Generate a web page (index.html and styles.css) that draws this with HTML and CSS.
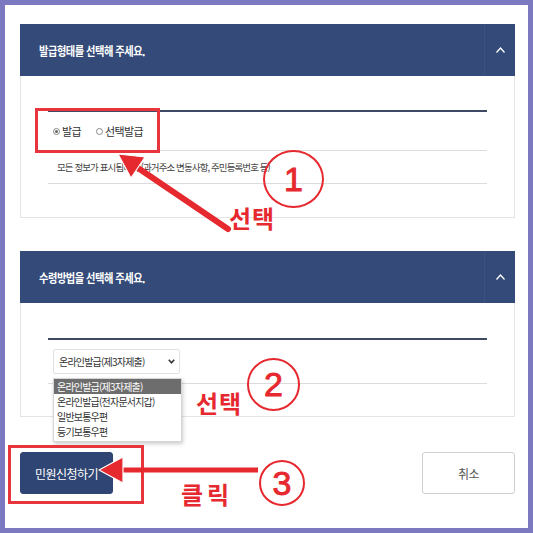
FILE: index.html
```html
<!DOCTYPE html>
<html lang="ko">
<head>
  <meta charset="UTF-8" />
  <meta name="viewport" content="width=device-width, initial-scale=1.0" />
  <title>민원신청</title>
  <link rel="stylesheet" href="styles.css">
</head>
<body>
  <div class="frame">
    <div class="panel">
      <div class="panel-head">
        <span class="panel-title">발급형태를 선택해 주세요.</span>
        <span class="toggle">
          <svg width="9" height="6" viewBox="0 0 9 6"><polyline points="0.5,5.5 4.5,1 8.5,5.5" fill="none" stroke="#fff" stroke-width="1.3"/></svg>
        </span>
      </div>
      <div class="panel-body">
        <div class="rule-dark"></div>
        <div class="radio-row">
          <label class="radio"><span class="dot on"></span>발급</label>
          <label class="radio"><span class="dot"></span>선택발급</label>
        </div>
        <div class="rule-light"></div>
        <div class="note-row">모든 정보가 표시됩니다 (과거주소 변동사항, 주민등록번호 등)</div>
        <div class="rule-light"></div>
      </div>
    </div>

    <div class="panel second">
      <div class="panel-head">
        <span class="panel-title">수령방법을 선택해 주세요.</span>
        <span class="toggle">
          <svg width="9" height="6" viewBox="0 0 9 6"><polyline points="0.5,5.5 4.5,1 8.5,5.5" fill="none" stroke="#fff" stroke-width="1.3"/></svg>
        </span>
      </div>
      <div class="panel-body">
        <div class="rule-dark"></div>
        <div class="select-row">
          <div class="select">
            <span>온라인발급(제3자제출)</span>
            <svg width="7" height="5" viewBox="0 0 7 5"><polyline points="0.8,0.8 3.5,3.8 6.2,0.8" fill="none" stroke="#333" stroke-width="1.6"/></svg>
          </div>
        </div>
        <div class="rule-light"></div>
      </div>
    </div>

    <div class="actions">
      <button class="btn primary">민원신청하기</button>
      <button class="btn">취소</button>
    </div>
  </div>

  <!-- open dropdown list -->
  <ul class="options">
    <li class="active">온라인발급(제3자제출)</li>
    <li>온라인발급(전자문서지갑)</li>
    <li>일반보통우편</li>
    <li>등기보통우편</li>
  </ul>

  <!-- annotations -->
  <div class="mark box1"></div>
  <div class="mark box3"></div>
  <svg class="arrows" width="533" height="533" viewBox="0 0 533 533">
    <line x1="228" y1="229" x2="138" y2="168" stroke="#e6282f" stroke-width="6" stroke-linecap="round"/>
    <polygon points="118,154 145,157 131,178" fill="#e6282f" stroke="#fff" stroke-width="1.2" stroke-linejoin="round"/>
    <line x1="258" y1="470" x2="120" y2="470" stroke="#e6282f" stroke-width="5"/>
    <polygon points="99,470 123,457 123,483" fill="#e6282f" stroke="#fff" stroke-width="1.2" stroke-linejoin="round"/>
  </svg>
  <div class="num n1">1</div>
  <div class="num n2">2</div>
  <div class="num n3">3</div>
  <div class="label l1">선택</div>
  <div class="label l2">선택</div>
  <div class="label l3">클릭</div>
</body>
</html>
```

FILE: styles.css
```css
body {
  margin: 0;
  font-family: "Noto Sans CJK KR", "Noto Sans", sans-serif;
  position: relative;
  width: 533px;
  height: 533px;
  overflow: hidden;
}
.frame {
  box-sizing: border-box;
  width: 533px;
  height: 533px;
  border: 5px solid #7c79c1;
  background: #fff;
  padding: 19px 13px 0 15px;
}
.panel-head {
  height: 52px;
  background: #344a78;
  display: flex;
  align-items: center;
  justify-content: space-between;
}
.panel-title {
  display: inline-block;
  margin-left: 19px;
  color: #fff;
  font-size: 12.5px;
  font-weight: bold;
  letter-spacing: -0.6px;
  transform: scaleX(0.82);
  transform-origin: left center;
}
.toggle {
  width: 30px;
  height: 100%;
  border-left: 1px solid #3b5283;
  display: flex;
  align-items: center;
  justify-content: center;
}
.panel-body {
  border: 1px solid #e4e4e4;
  border-top: none;
  padding: 34px 27px 33px;
}
.second {
  margin-top: 33px;
}
.second .panel-body {
  padding-top: 35px;
  padding-bottom: 32px;
}
.rule-dark {
  height: 2px;
  background: #3e4a63;
}
.rule-light {
  height: 1px;
  background: #dcdcdc;
}
.radio-row {
  height: 38px;
  display: flex;
  align-items: center;
  gap: 15px;
  padding-left: 5px;
  font-size: 11px;
  color: #333;
}
.radio {
  display: flex;
  align-items: center;
  gap: 2px;
  letter-spacing: -0.6px;
}
.dot {
  width: 7px;
  height: 7px;
  border: 1px solid #888;
  border-radius: 50%;
  box-sizing: border-box;
  position: relative;
}
.dot.on::after {
  content: "";
  position: absolute;
  left: 1px;
  top: 1px;
  width: 3px;
  height: 3px;
  border-radius: 50%;
  background: #666;
}
.note-row {
  height: 32px;
  display: flex;
  align-items: center;
  padding-left: 9px;
  font-size: 9.5px;
  letter-spacing: -0.9px;
  color: #444;
}
.select-row {
  height: 43px;
  display: flex;
  align-items: center;
  padding-left: 5px;
}
.select {
  box-sizing: border-box;
  width: 127px;
  height: 25px;
  border: 1px solid #e2e2e2;
  border-radius: 2px;
  display: flex;
  align-items: center;
  justify-content: space-between;
  padding: 0 4px 0 5px;
  font-size: 10px;
  letter-spacing: -0.8px;
  color: #333;
}
.actions {
  margin-top: 35px;
  display: flex;
  justify-content: space-between;
}
.btn {
  width: 93px;
  height: 42px;
  border: 1px solid #cfcfcf;
  border-radius: 3px;
  background: #fff;
  font-family: inherit;
  font-size: 12px;
  color: #555;
  letter-spacing: -0.5px;
}
.btn.primary {
  background: #2f4573;
  border-color: #2f4573;
  color: #fff;
}
.options {
  position: absolute;
  left: 53px;
  top: 378px;
  width: 127px;
  margin: 0;
  padding: 0 0 2px;
  list-style: none;
  background: #fff;
  border: 1px solid #d6d6d6;
  box-shadow: 1px 2px 4px rgba(0,0,0,0.2);
  font-size: 10px;
  letter-spacing: -0.8px;
  color: #333;
}
.options li {
  height: 15px;
  line-height: 15px;
  padding-left: 3px;
}
.options li.active {
  background: #6d6d6d;
  color: #fff;
}
.mark {
  position: absolute;
  border: 3px solid #e8353d;
  box-sizing: border-box;
}
.box1 {
  left: 35px;
  top: 108px;
  width: 125px;
  height: 45px;
}
.box3 {
  left: 8px;
  top: 445px;
  width: 136px;
  height: 59px;
}
.arrows {
  position: absolute;
  left: 0;
  top: 0;
}
.num {
  position: absolute;
  box-sizing: border-box;
  border: 2px solid #e6282f;
  border-radius: 50%;
  display: flex;
  align-items: center;
  justify-content: center;
  font-family: "Liberation Sans", Arial, sans-serif;
  color: #e6282f;
  font-size: 34px;
  -webkit-text-stroke: 0.9px #e6282f;
}
.n1 {
  left: 263px;
  top: 150px;
  width: 61px;
  height: 58px;
}
.n2 {
  left: 247px;
  top: 358px;
  width: 53px;
  height: 53px;
}
.n3 {
  left: 259px;
  top: 460px;
  width: 46px;
  height: 46px;
}
.label {
  position: absolute;
  color: #e6282f;
  font-weight: bold;
  font-size: 24px;
  line-height: 1;
  letter-spacing: 1px;
}
.l1 {
  left: 229px;
  top: 206px;
}
.l2 {
  left: 196px;
  top: 391px;
}
.l3 {
  left: 181px;
  top: 482px;
  letter-spacing: 4px;
}
```
